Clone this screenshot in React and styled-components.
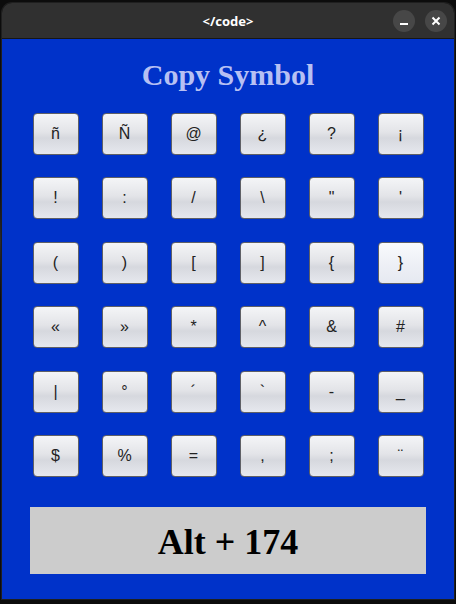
import React from 'react'
import styled, { createGlobalStyle } from 'styled-components'

const GlobalStyle = createGlobalStyle`
  html, body {
    margin: 0;
    padding: 0;
    background: #141414;
  }
  #root {
    width: 456px;
    height: 604px;
  }
`

const Desktop = styled.div`
  width: 456px;
  height: 604px;
  padding: 3px 2px 0 2px;
  box-sizing: border-box;
  background: radial-gradient(circle at 0 40%, #2a2a2a 0, #0c0c0c 60px, #0c0c0c 100%);
`

const Window = styled.div`
  width: 452px;
  display: flex;
  flex-direction: column;
  border-radius: 10px 10px 0 0;
  overflow: hidden;
  box-shadow: 0 0 0 1px #1f1f1f;
`

const TitleBar = styled.div`
  height: 35px;
  background: #303030;
  border-bottom: 1px solid #161616;
  display: grid;
  grid-template-columns: 1fr auto 1fr;
  align-items: center;
`

const WindowTitle = styled.div`
  grid-column: 2;
  color: #ffffff;
  font-family: 'Noto Sans', 'DejaVu Sans', sans-serif;
  font-weight: 700;
  font-size: 13px;
`

const Controls = styled.div`
  grid-column: 3;
  justify-self: end;
  display: flex;
  gap: 10px;
  padding-right: 7px;
`

const RoundButton = styled.div`
  width: 22px;
  height: 22px;
  border-radius: 50%;
  background: #474747;
  display: flex;
  align-items: center;
  justify-content: center;
`

const Content = styled.div`
  height: 560px;
  background: #0032c9;
  display: flex;
  flex-direction: column;
  align-items: center;
  padding-top: 21px;
  box-sizing: border-box;
`

const Heading = styled.h1`
  margin: 0 0 23px 0;
  font-family: 'Liberation Serif', 'Times New Roman', serif;
  font-weight: 700;
  font-size: 30px;
  line-height: 30px;
  color: #b7c0f3;
`

const Grid = styled.div`
  display: grid;
  grid-template-columns: repeat(6, 46px);
  grid-auto-rows: 42px;
  column-gap: 23px;
  row-gap: 22.4px;
`

const Key = styled.button`
  box-sizing: border-box;
  width: 46px;
  height: 42px;
  padding: 0;
  border: 1px solid #5f6066;
  border-radius: 4px;
  background: ${p =>
    p.$hot
      ? 'linear-gradient(#f9fafd, #eef0f6 50%, #e6e9f1 100%)'
      : 'linear-gradient(#f4f5f7, #e3e4e8 45%, #d6d8de 60%, #e6e8ee 100%)'};
  color: #222222;
  font-family: 'Liberation Sans', Arial, sans-serif;
  font-size: 16px;
  display: flex;
  align-items: center;
  justify-content: center;
  cursor: pointer;
`

const Output = styled.div`
  margin-top: 30px;
  width: 396px;
  height: 67px;
  background: #cccccc;
  display: flex;
  align-items: center;
  justify-content: center;
  font-family: 'Liberation Serif', 'Times New Roman', serif;
  font-weight: 700;
  font-size: 36px;
  color: #000000;
  padding-top: 4px;
  box-sizing: border-box;
`

const symbols = [
  'ñ', 'Ñ', '@', '¿', '?', '¡',
  '!', ':', '/', '\\', '"', "'",
  '(', ')', '[', ']', '{', '}',
  '«', '»', '*', '^', '&', '#',
  '|', '°', '´', '`', '-', '_',
  '$', '%', '=', ',', ';', '¨',
]

export default function App() {
  return (
    <>
      <GlobalStyle />
      <Desktop>
        <Window>
          <TitleBar>
            <WindowTitle>&lt;/code&gt;</WindowTitle>
            <Controls>
              <RoundButton>
                <svg width="10" height="10" viewBox="0 0 10 10">
                  <rect x="1" y="7" width="8" height="2" fill="#fff" />
                </svg>
              </RoundButton>
              <RoundButton>
                <svg width="10" height="10" viewBox="0 0 10 10">
                  <path d="M1.5 1.5 L8.5 8.5 M8.5 1.5 L1.5 8.5" stroke="#fff" strokeWidth="2" />
                </svg>
              </RoundButton>
            </Controls>
          </TitleBar>
          <Content>
            <Heading>Copy Symbol</Heading>
            <Grid>
              {symbols.map((s, i) => (
                <Key key={i} $hot={s === '}'}>{s}</Key>
              ))}
            </Grid>
            <Output>Alt + 174</Output>
          </Content>
        </Window>
      </Desktop>
    </>
  )
}
